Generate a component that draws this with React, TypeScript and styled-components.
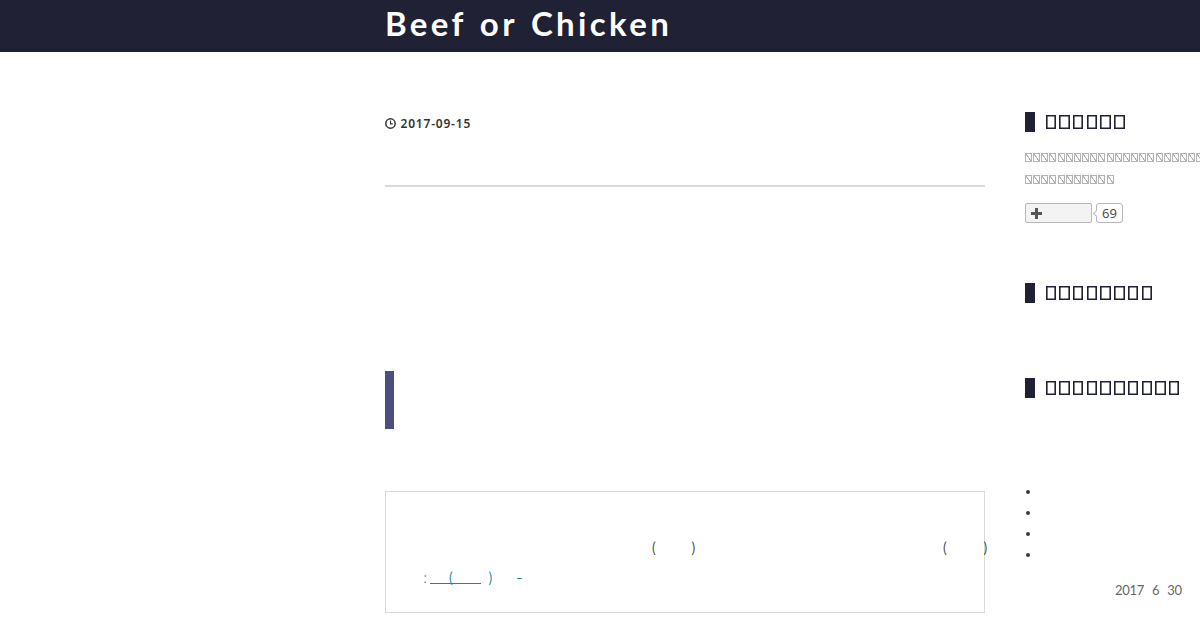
import styled, { createGlobalStyle } from "styled-components";

const GlobalStyle = createGlobalStyle`
  * {
    box-sizing: border-box;
  }

  body {
    margin: 0;
    background-color: #fff;
    color: #454545;
    font-family: Lato, "Liberation Sans", sans-serif;
    overflow: hidden;
  }
`;

const Page = styled.div`
  height: 630px;
  overflow: hidden;
`;

const Header = styled.header`
  height: 52px;
  padding-left: 385px;
  background-color: #202134;
`;

const Title = styled.h1`
  margin: 0;
  font-size: 33px;
  font-weight: 700;
  line-height: 47px;
  letter-spacing: 3.35px;
  word-spacing: 2.4px;
  white-space: nowrap;
  color: #fff;
`;

const Columns = styled.div`
  display: grid;
  grid-template-columns: 600px 175px;
  column-gap: 40px;
  padding: 60px 0 0 385px;
`;

const Entry = styled.main`
  display: flex;
  flex-direction: column;
`;

const EntryHeader = styled.div`
  height: 75px;
  padding-top: 3px;
  border-bottom: 2px solid #dadada;
`;

const EntryDate = styled.time`
  display: flex;
  align-items: center;
  gap: 4.5px;
  height: 17px;
  font-family: "Noto Sans", sans-serif;
  font-size: 12px;
  font-weight: 600;
  letter-spacing: 0.8px;
  color: #333;
`;

const SectionHeading = styled.h3`
  height: 58px;
  margin: 184px 0 62px;
  border-left: 9px solid #4c4f7e;
`;

const Quote = styled.blockquote`
  height: 122px;
  margin: 0;
  padding: 42px 0 0 37px;
  border: 1px solid #dadada;
  font-family: Inter, "Liberation Sans", sans-serif;
  font-size: 15px;
  font-weight: 300;
`;

const Line = styled.div<{ $indent?: number }>`
  display: flex;
  height: 30px;
  padding-left: ${({ $indent }) => $indent ?? 0}px;
  line-height: 28px;
  white-space: nowrap;
`;

const Gap = styled.span<{ $width: number }>`
  flex: none;
  width: ${({ $width }) => $width}px;
`;

const Mark = styled.span<{ $width?: number }>`
  flex: none;
  width: ${({ $width }) => $width ?? 6}px;
`;

const QuoteLink = styled.a`
  display: flex;
  color: #1487a5;
`;

const Underlined = styled.span`
  display: flex;
  width: 51px;
  height: 20px;
  padding-left: 18px;
  border-bottom: 1px solid #1487a5;
`;

const Sidebar = styled.aside`
  display: flex;
  flex-direction: column;
`;

const ModuleTitle = styled.h2`
  display: flex;
  align-items: center;
  gap: 3.3px;
  height: 20px;
  margin: 0;
  padding-left: 10.7px;
  border-left: 10px solid #202134;
`;

const Box = styled.span`
  flex: none;
  width: 10.4px;
  height: 14px;
  box-shadow: inset 0 0 0 1.6px #202134;
`;

const Description = styled.div`
  padding: 21px 0 0;
`;

const SmallRow = styled.div`
  display: flex;
  gap: 1.17px;
  height: 22px;
`;

const SmallBox = styled.span`
  flex: none;
  width: 7px;
  height: 9px;
  border: 1px solid #b4b4b4;
  background: linear-gradient(
    to top right,
    transparent 42%,
    #aaa 46%,
    #aaa 54%,
    transparent 58%
  );
`;

const ReaderRow = styled.div`
  display: flex;
  gap: 4px;
  height: 20px;
  margin: 6px 0 60px;
`;

const ReaderButton = styled.button`
  display: flex;
  align-items: center;
  width: 67px;
  height: 20px;
  padding: 0 0 0 5px;
  border: 1px solid #b8b8b8;
  border-radius: 2px;
  background-color: #f3f3f3;
`;

const ReaderCount = styled.span`
  position: relative;
  width: 27px;
  height: 20px;
  border: 1px solid #b8b8b8;
  border-radius: 3px;
  font-family: "Open Sans", sans-serif;
  font-size: 13px;
  line-height: 18px;
  text-align: center;
  color: #444;

  &::before {
    content: "";
    position: absolute;
    top: 7px;
    left: -3px;
    width: 4px;
    height: 4px;
    border: solid #b8b8b8;
    border-width: 0 0 1px 1px;
    background-color: #fff;
    transform: rotate(45deg);
  }
`;

const Profile = styled.div`
  height: 75px;
`;

const EntryList = styled.ul`
  margin: 83.5px 0 0;
  padding: 0;
  list-style: none;
`;

const EntryItem = styled.li`
  display: flex;
  align-items: center;
  height: 21px;
  padding-left: 0.5px;

  &::before {
    content: "";
    width: 4px;
    height: 4px;
    border-radius: 50%;
    background-color: #3c3c3c;
  }
`;

const Deadline = styled.div`
  display: flex;
  gap: 8px;
  margin-top: 14.5px;
  padding-left: 90px;
  font-size: 13px;
  line-height: 20px;
  letter-spacing: -0.3px;
  color: #666;
`;

function ClockIcon() {
  return (
    <svg width="11" height="11" viewBox="0 0 11 11" fill="none" stroke="#333">
      <circle cx="5.5" cy="5.5" r="4.7" strokeWidth="1.5" />
      <path d="M5.5 2.5v3.4H3.2" transform="matrix(-1 0 0 1 11 0)" strokeWidth="1.1" />
    </svg>
  );
}

function PlusIcon() {
  return (
    <svg width="11" height="11" viewBox="0 0 11 11" fill="#555">
      <path d="M4 0h3v4h4v3H7v4H4V7H0V4h4z" />
    </svg>
  );
}

function SidebarTitle({ count }: { count: number }) {
  return (
    <ModuleTitle>
      {Array.from({ length: count }, (_, i) => (
        <Box key={i} />
      ))}
    </ModuleTitle>
  );
}

function SmallBoxes({ count }: { count: number }) {
  return (
    <SmallRow>
      {Array.from({ length: count }, (_, i) => (
        <SmallBox key={i} />
      ))}
    </SmallRow>
  );
}

export default function App() {
  return (
    <Page>
      <GlobalStyle />
      <Header>
        <Title>Beef or Chicken</Title>
      </Header>
      <Columns>
        <Entry>
          <EntryHeader>
            <EntryDate>
              <ClockIcon />
              2017-09-15
            </EntryDate>
          </EntryHeader>
          <SectionHeading />
          <Quote>
            <Line $indent={228}>
              <Mark>(</Mark>
              <Gap $width={34} />
              <Mark>)</Mark>
              <Gap $width={245} />
              <Mark>(</Mark>
              <Gap $width={35} />
              <Mark>)</Mark>
            </Line>
            <Line>
              <QuoteLink>
                <Mark $width={7}>:</Mark>
                <Underlined>(</Underlined>
                <Gap $width={7} />
                <Mark $width={28}>)</Mark>
                <Mark>-</Mark>
              </QuoteLink>
            </Line>
          </Quote>
        </Entry>
        <Sidebar>
          <SidebarTitle count={6} />
          <Description>
            <SmallBoxes count={22} />
            <SmallBoxes count={11} />
          </Description>
          <ReaderRow>
            <ReaderButton type="button" aria-label="+">
              <PlusIcon />
            </ReaderButton>
            <ReaderCount>69</ReaderCount>
          </ReaderRow>
          <SidebarTitle count={8} />
          <Profile />
          <SidebarTitle count={10} />
          <EntryList>
            <EntryItem />
            <EntryItem />
            <EntryItem />
            <EntryItem />
          </EntryList>
          <Deadline>
            <span>2017</span>
            <span>6</span>
            <span>30</span>
          </Deadline>
        </Sidebar>
      </Columns>
    </Page>
  );
}
